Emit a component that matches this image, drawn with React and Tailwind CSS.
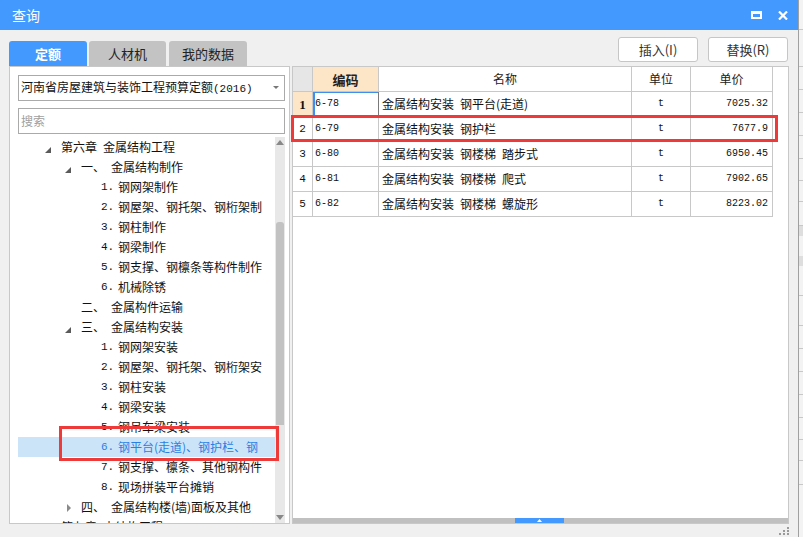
import React from "react";

const tree = [
  { lv: 0, tri: "open", text: "第六章\u2002金属结构工程" },
  { lv: 1, tri: "open", label: "一、", text: "金属结构制作" },
  { lv: 2, num: "1.", text: "钢网架制作" },
  { lv: 2, num: "2.", text: "钢屋架、钢托架、钢桁架制" },
  { lv: 2, num: "3.", text: "钢柱制作" },
  { lv: 2, num: "4.", text: "钢梁制作" },
  { lv: 2, num: "5.", text: "钢支撑、钢檩条等构件制作" },
  { lv: 2, num: "6.", text: "机械除锈" },
  { lv: 1, tri: "none", label: "二、", text: "金属构件运输" },
  { lv: 1, tri: "open", label: "三、", text: "金属结构安装" },
  { lv: 2, num: "1.", text: "钢网架安装" },
  { lv: 2, num: "2.", text: "钢屋架、钢托架、钢桁架安" },
  { lv: 2, num: "3.", text: "钢柱安装" },
  { lv: 2, num: "4.", text: "钢梁安装" },
  { lv: 2, num: "5.", text: "钢吊车梁安装" },
  { lv: 2, num: "6.", text: "钢平台(走道)、钢护栏、钢", sel: true },
  { lv: 2, num: "7.", text: "钢支撑、檩条、其他钢构件" },
  { lv: 2, num: "8.", text: "现场拼装平台摊销" },
  { lv: 1, tri: "closed", label: "四、", text: "金属结构楼(墙)面板及其他" },
  { lv: 0, tri: "none", text: "第七章\u2002木结构工程" },
];

const table = [
  ["1", "6-78", "金属结构安装\u2002钢平台(走道)", "t", "7025.32"],
  ["2", "6-79", "金属结构安装\u2002钢护栏", "t", "7677.9"],
  ["3", "6-80", "金属结构安装\u2002钢楼梯\u2002踏步式", "t", "6950.45"],
  ["4", "6-81", "金属结构安装\u2002钢楼梯\u2002爬式", "t", "7902.65"],
  ["5", "6-82", "金属结构安装\u2002钢楼梯\u2002螺旋形", "t", "8223.02"],
];

const mono = "font-['Liberation_Mono',monospace]";

function Tri({ kind }) {
  if (kind === "open")
    return (
      <svg width="6" height="6" className="mt-[5px]">
        <polygon points="6,0 6,6 0,6" fill="#5a5a5a" />
      </svg>
    );
  if (kind === "closed")
    return (
      <svg width="5" height="8" className="mt-[2px] ml-[2px]">
        <polygon points="0,0 4,4 0,8" fill="#8a8a8a" />
      </svg>
    );
  return null;
}

function TreeRow({ r }) {
  return (
    <div
      className={
        "flex items-center h-[20px] whitespace-nowrap overflow-hidden " +
        (r.sel ? "bg-[#cce4f8] text-[#2a7fe2]" : "text-[#111]")
      }
    >
      {r.lv === 0 && (
        <>
          <div className="w-[27px] shrink-0" />
          <div className="w-[16px] shrink-0 flex items-center">
            <Tri kind={r.tri} />
          </div>
          <span>{r.text}</span>
        </>
      )}
      {r.lv === 1 && (
        <>
          <div className="w-[47px] shrink-0" />
          <div className="w-[16px] shrink-0 flex items-center">
            <Tri kind={r.tri} />
          </div>
          <span className="w-[30px] shrink-0">{r.label}</span>
          <span>{r.text}</span>
        </>
      )}
      {r.lv === 2 && (
        <>
          <div className="w-[83px] shrink-0" />
          <span className={"w-[17px] shrink-0 text-[11px] " + mono}>{r.num}</span>
          <span>{r.text}</span>
        </>
      )}
    </div>
  );
}

export default function App() {
  return (
    <div className="relative w-[803px] h-[537px] flex overflow-hidden font-['Noto_Sans_CJK_SC',sans-serif] text-[12px] leading-none">
      {/* dialog */}
      <div className="w-[798px] shrink-0 flex flex-col bg-[#f0f0f0]">
        {/* title bar */}
        <div className="h-[30px] bg-[#4499fe] flex items-center justify-between pl-[12px] pr-[10px]">
          <span className="text-white text-[14px]">查询</span>
          <div className="flex items-center gap-[16px]">
            <svg width="11" height="8">
              <rect x="1" y="1.5" width="9" height="5.5" fill="none" stroke="#fff" strokeWidth="2" />
              <rect x="0" y="0" width="11" height="3" fill="#fff" />
            </svg>
            <svg width="10" height="9">
              <path d="M1 0.5 L9 8.5 M9 0.5 L1 8.5" stroke="#fff" strokeWidth="2.2" />
            </svg>
          </div>
        </div>

        {/* body */}
        <div className="flex-1 flex flex-col pl-[9px] pr-[9px]">
          {/* tabs + buttons */}
          <div className="h-[36px] flex justify-between">
            <div className="self-end flex">
              <div className="w-[78px] h-[25px] bg-[#4499fe] rounded-t-[3px] flex items-center justify-center text-white font-bold text-[13px]">
                定额
              </div>
              <div className="ml-[2px] w-[77px] h-[25px] bg-[#c3c3c3] rounded-t-[3px] flex items-center justify-center text-[#222] text-[13px]">
                人材机
              </div>
              <div className="ml-[3px] w-[78px] h-[25px] bg-[#c3c3c3] rounded-t-[3px] flex items-center justify-center text-[#222] text-[13px]">
                我的数据
              </div>
            </div>
            <div className="self-start mt-[7px] flex gap-[10px] mr-[1px]">
              <div className="w-[80px] h-[25px] bg-white border border-[#c6c6c6] rounded-[3px] flex items-center justify-center text-[13px] text-[#333]">
                插入(I)
              </div>
              <div className="w-[80px] h-[25px] bg-white border border-[#c6c6c6] rounded-[3px] flex items-center justify-center text-[13px] text-[#333]">
                替换(R)
              </div>
            </div>
          </div>

          {/* content */}
          <div className="h-[458px] flex gap-[2px]">
            {/* left panel */}
            <div className="w-[281px] shrink-0 bg-white border border-[#c8c8c8] flex flex-col pl-[8px] pr-[4px] pt-[8px]">
              <div className="h-[26px] border border-[#aaaaaa] flex items-center justify-between pl-[2px] pr-[5px] whitespace-nowrap">
                <span className="text-[#111]">
                  河南省房屋建筑与装饰工程预算定额<span className={"text-[11px] " + mono}>(2016)</span>
                </span>
                <svg width="6" height="4">
                  <polygon points="0,0 6,0 3,3" fill="#777" />
                </svg>
              </div>
              <div className="mt-[7px] h-[26px] border border-[#aaaaaa] flex items-center pl-[2px] text-[#a0a0a0]">
                搜索
              </div>
              <div className="mt-[3px] flex-1 flex overflow-hidden">
                <div className="flex-1 overflow-hidden">
                  {tree.map((r, i) => (
                    <TreeRow key={i} r={r} />
                  ))}
                </div>
                <div className="w-[10px] shrink-0 bg-[#e8e8e8] flex flex-col">
                  <div className="h-[10px] flex items-center justify-center">
                    <svg width="8" height="5">
                      <polygon points="0,5 8,5 4,0" fill="#888" />
                    </svg>
                  </div>
                  <div className="h-[75px]" />
                  <div className="h-[203px] mx-[1px] bg-[#c2c2c2] rounded-t-[3px]" />
                  <div className="flex-1" />
                  <div className="h-[10px] flex items-center justify-center pb-[2px]">
                    <svg width="8" height="5">
                      <polygon points="0,0 8,0 4,5" fill="#888" />
                    </svg>
                  </div>
                </div>
              </div>
            </div>

            {/* right panel */}
            <div className="flex-1 bg-white border border-[#c8c8c8] flex flex-col">
              <div className="w-[480px]">
                {/* header */}
                <div className="flex h-[25px] border-b border-[#c8c8c8]">
                  <div className="w-[20px] bg-[#e6e6e6] border-r border-[#c8c8c8]" />
                  <div className="w-[66px] bg-[#fde6c8] border-r border-[#c8c8c8] flex items-center justify-center font-bold text-[13px] text-[#222]">
                    编码
                  </div>
                  <div className="w-[253px] border-r border-[#c8c8c8] flex items-center justify-center text-[#222]">
                    名称
                  </div>
                  <div className="w-[59px] border-r border-[#c8c8c8] flex items-center justify-center text-[#222]">
                    单位
                  </div>
                  <div className="w-[82px] border-r border-[#c8c8c8] flex items-center justify-center text-[#222]">
                    单价
                  </div>
                </div>
                {table.map((r, i) => (
                  <div key={i} className="flex h-[25px] border-b border-[#c8c8c8] text-[#111]">
                    <div
                      className={
                        "w-[20px] border-r border-[#c8c8c8] flex items-center justify-center " +
                        (i === 0 ? "bg-[#fde6c8] font-bold font-['Liberation_Serif',serif] text-[13px]" : mono + " text-[11px]")
                      }
                    >
                      {r[0]}
                    </div>
                    <div
                      className={
                        "w-[66px] border-r flex items-center pl-[2px] text-[10px] " +
                        mono +
                        (i === 0
                          ? " border-[#7a7a7a] shadow-[inset_2px_1px_0_#3d8ff0]"
                          : " border-[#c8c8c8]")
                      }
                    >
                      {r[1]}
                    </div>
                    <div className="w-[253px] border-r border-[#c8c8c8] flex items-center pl-[3px] whitespace-nowrap">
                      {r[2]}
                    </div>
                    <div className={"w-[59px] border-r border-[#c8c8c8] flex items-center justify-center text-[10px] " + mono}>
                      {r[3]}
                    </div>
                    <div className={"w-[82px] border-r border-[#c8c8c8] flex items-center justify-end pr-[4px] text-[10px] " + mono}>
                      {r[4]}
                    </div>
                  </div>
                ))}
              </div>
              <div className="flex-1" />
              <div className="h-[5px] bg-[#c0c0c0] flex">
                <div className="w-[222px]" />
                <div className="w-[49px] bg-[#4499fe] flex items-center justify-center">
                  <svg width="5" height="3">
                    <polygon points="0,3 5,3 2.5,0" fill="#fff" />
                  </svg>
                </div>
              </div>
            </div>
          </div>

          {/* bottom */}
          <div className="h-[13px] flex justify-end items-end pb-[2px] pr-[0px]">
            <svg width="10" height="8">
              <rect x="8" y="0" width="2" height="2" fill="#9a9a9a" />
              <rect x="4" y="3" width="2" height="2" fill="#9a9a9a" />
              <rect x="8" y="3" width="2" height="2" fill="#9a9a9a" />
              <rect x="0" y="6" width="2" height="2" fill="#9a9a9a" />
              <rect x="4" y="6" width="2" height="2" fill="#9a9a9a" />
              <rect x="8" y="6" width="2" height="2" fill="#9a9a9a" />
            </svg>
          </div>
        </div>
      </div>

      {/* background window strip */}
      <div className="flex-1 border-l border-[#a0a0a0] bg-[#f3f3f3] flex flex-col">
        <div className="h-[30px] border-b border-[#c8c8c8]" />
        <div className="h-[37px] border-b border-[#c8c8c8]" />
        <div className="h-[23px] border-b border-[#c8c8c8]" />
        <div className="h-[23px] border-b border-[#c8c8c8]" />
        <div className="h-[23px] border-b border-[#c8c8c8]" />
        <div className="h-[23px] border-b border-[#c8c8c8]" />
        <div className="h-[22px] border-b border-[#c8c8c8]" />
        <div className="h-[21px] border-b border-[#c8c8c8]" />
        <div className="h-[24px] border-b border-[#c8c8c8]" />
        <div className="h-[10px] bg-[#dedede]" />
        <div className="h-[20px]" />
        <div className="h-[10px] bg-[#dedede]" />
        <div className="h-[30px] border-b border-[#c8c8c8]" />
        <div className="h-[30px] border-b border-[#c8c8c8]" />
        <div className="h-[23px] border-b border-[#c8c8c8]" />
        <div className="h-[23px] border-b border-[#c8c8c8]" />
        <div className="h-[23px] border-b border-[#c8c8c8]" />
        <div className="h-[23px] border-b border-[#c8c8c8]" />
        <div className="h-[22px] border-b border-[#c8c8c8]" />
        <div className="h-[21px] border-b border-[#c8c8c8]" />
        <div className="h-[24px] border-b border-[#c8c8c8]" />
      </div>

      {/* red highlight boxes */}
      <div className="absolute left-[59px] top-[426px] w-[220px] h-[35px] border-[3px] border-[#ef3a3a]" />
      <div className="absolute left-[291px] top-[115px] w-[487px] h-[27px] border-[3px] border-[#ef3a3a]" />
    </div>
  );
}
